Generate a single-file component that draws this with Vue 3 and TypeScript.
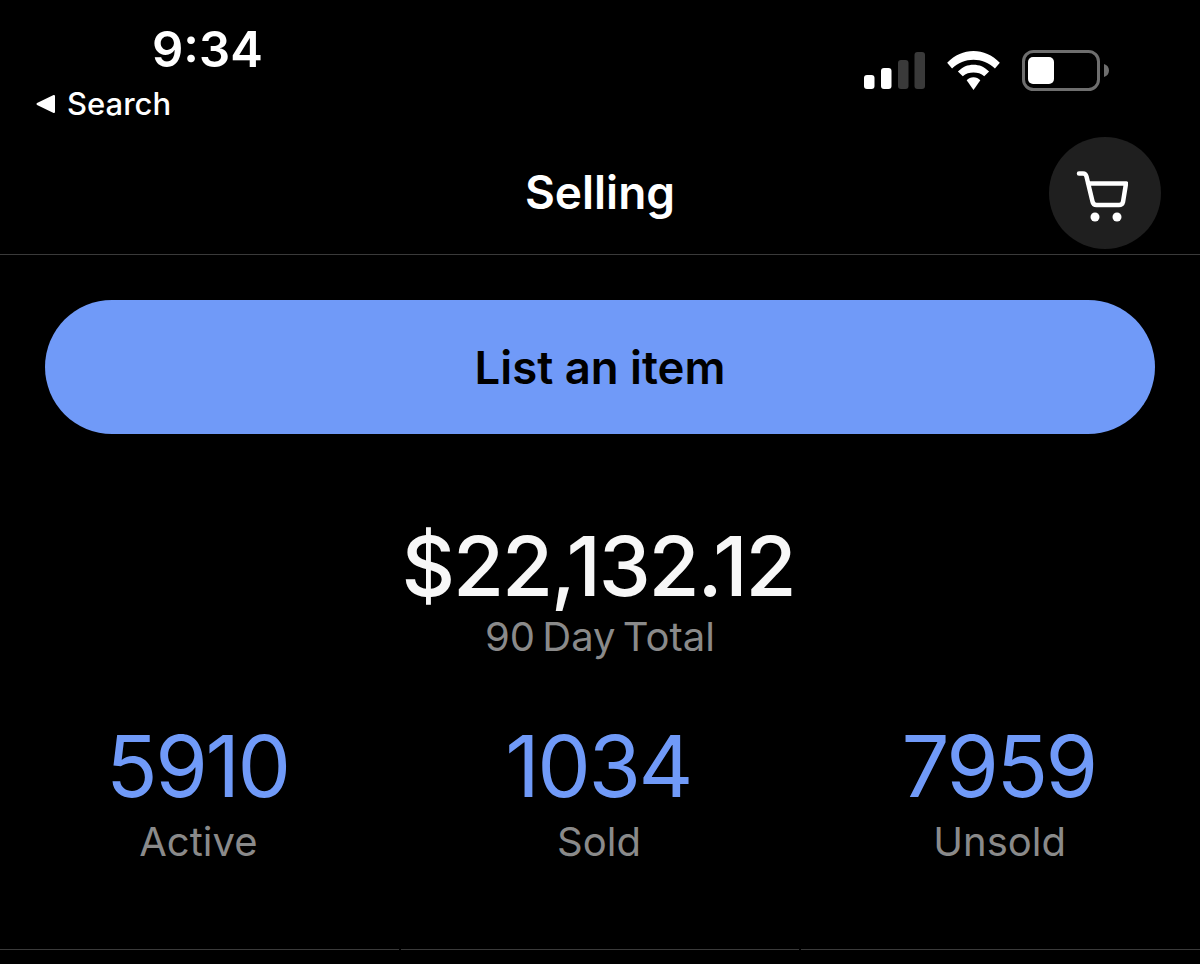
<script setup lang="ts">
interface Stat { value: string; label: string }
const stats: Stat[] = [
  { value: '5910', label: 'Active' },
  { value: '1034', label: 'Sold' },
  { value: '7959', label: 'Unsold' },
]
</script>

<template>
  <div class="screen">
    <div class="status">
      <div class="status-left">
        <div class="time">9:34</div>
        <div class="back">
          <svg class="back-arrow" width="20" height="20" viewBox="0 0 20 20"><path d="M1.500 10 L18 2 V18 Z" fill="#fff" stroke="#fff" stroke-width="2" stroke-linejoin="round"/></svg>
          <span>Search</span>
        </div>
      </div>
      <div class="status-right">
        <svg class="signal" width="61" height="37" viewBox="0 0 61 37">
          <rect x="0" y="23" width="10.500" height="14" rx="3" fill="#fff"/>
          <rect x="17" y="16" width="10.500" height="21" rx="3" fill="#fff"/>
          <rect x="34" y="8" width="10.500" height="29" rx="3" fill="#3a3a3a"/>
          <rect x="50.500" y="0" width="10.500" height="37" rx="3" fill="#3a3a3a"/>
        </svg>
        <svg class="wifi" width="53" height="39" viewBox="0 0 54 40">
          <path d="M27 0 C37 0 46 4 54 12 L49 18 C43 12 35 9 27 9 C19 9 11 12 5 18 L0 12 C8 4 17 0 27 0 Z" fill="#fff"/>
          <path d="M27 14 C33 14 38 16 43 21 L38 26 C35 23 31 22 27 22 C23 22 19 23 16 26 L11 21 C16 16 21 14 27 14 Z" fill="#fff"/>
          <path d="M27 27 C30 27 32 28 34 30 L27 40 L20 30 C22 28 24 27 27 27 Z" fill="#fff"/>
        </svg>
        <svg class="battery" width="87" height="41" viewBox="0 0 87 41">
          <rect x="1.500" y="1.500" width="75" height="38" rx="10" fill="none" stroke="#6e6e6e" stroke-width="3"/>
          <rect x="6" y="7" width="26" height="27" rx="5" fill="#fff"/>
          <path d="M82 14 C85 15 87 17 87 20.500 C87 24 85 26 82 27 Z" fill="#6e6e6e"/>
        </svg>
      </div>
    </div>

    <header class="nav">
      <h1 class="title">Selling</h1>
      <button class="cart" aria-label="Cart">
        <svg width="52" height="52" viewBox="0 0 52 52" fill="none">
          <path d="M3 2.500 H7 C9 2.500 10 3.500 10.500 5.500 L16.500 30.500 C17 33 18.500 34 20.500 34 H43 C45 34 46.500 33 47 31 L50 12.500 H12" stroke="#fff" stroke-width="4.500" stroke-linecap="round" stroke-linejoin="round"/>
          <circle cx="19" cy="46" r="4.500" fill="#fff"/>
          <circle cx="41" cy="46" r="4.500" fill="#fff"/>
        </svg>
      </button>
    </header>

    <main class="body">
      <button class="list-btn">List an item</button>
      <section class="total">
        <div class="amount">$22,132.12</div>
        <div class="total-label">90 Day Total</div>
      </section>
    </main>
    <section class="stats">
      <div v-for="s in stats" :key="s.label" class="stat">
        <div class="stat-value">{{ s.value }}</div>
        <div class="stat-label">{{ s.label }}</div>
      </div>
    </section>
  </div>
</template>

<style>
html, body { margin: 0; background: #000; }
</style>

<style scoped>
.screen {
  width: 1200px;
  height: 964px;
  background: #000;
  color: #fff;
  font-family: Inter, "Liberation Sans", sans-serif;
  overflow: hidden;
}
.status {
  height: 130px;
  display: flex;
  justify-content: space-between;
  box-sizing: border-box;
  padding: 0 91px 0 36px;
}
.status-left { padding-top: 22px; }
.time {
  margin-left: 116px;
  font-size: 49px;
  line-height: 56px;
  font-weight: 600;
}
.back {
  display: flex;
  align-items: center;
  gap: 11px;
  font-size: 31px;
  line-height: 36px;
  font-weight: 500;
  margin-top: 8px;
}
.status-right {
  display: flex;
  align-items: flex-start;
  padding-top: 50px;
}
.signal { margin-top: 2px; }
.wifi { margin-left: 22px; margin-top: 1px; }
.battery { margin-left: 22px; }
.nav {
  height: 125px;
  box-sizing: border-box;
  border-bottom: 1px solid #3a3a3a;
  display: flex;
  align-items: center;
  justify-content: center;
  position: relative;
}
.title {
  margin: 0;
  font-size: 46px;
  line-height: 52px;
  font-weight: 600;
}
.cart {
  position: absolute;
  right: 39px;
  top: 7px;
  width: 112px;
  height: 112px;
  border: 0;
  padding: 8px 6px 0 0;
  border-radius: 50%;
  background: #1f1f1f;
  display: flex;
  align-items: center;
  justify-content: center;
}
.body {
  box-sizing: border-box;
  padding: 45px 45px 0;
}
.list-btn {
  display: block;
  width: 100%;
  height: 134px;
  border: 0;
  border-radius: 67px;
  background: #709af8;
  color: #000;
  font-family: inherit;
  font-size: 45.5px;
  font-weight: 600;
}
.total {
  text-align: center;
  margin-top: 92px;
}
.amount {
  font-size: 83px;
  line-height: 80px;
  font-weight: 450;
  letter-spacing: -2.200px;
  padding-right: 4px;
  color: #f7f7f7;
}
.total-label {
  font-size: 40px;
  line-height: 44px;
  color: #8a8a8a;
  margin-top: 9px;
  word-spacing: -4px;
}
.stats {
  display: grid;
  grid-template-columns: repeat(3, 1fr);
  column-gap: 2px;
  margin-top: 68px;
}
.stat {
  box-sizing: border-box;
  height: 223px;
  text-align: center;
  border-bottom: 1px solid #3a3a3a;
}
.stat-value {
  font-size: 85px;
  line-height: 80px;
  color: #709af8;
  letter-spacing: -2.500px;
  font-weight: 430;
  padding-right: 4px;
}
.stat-label {
  font-size: 40px;
  line-height: 44px;
  color: #8a8a8a;
  margin-top: 13px;
  padding-right: 2px;
}
</style>
